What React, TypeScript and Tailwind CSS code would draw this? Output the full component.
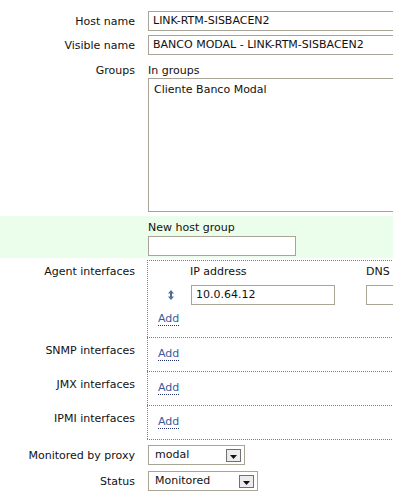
import type { ReactNode } from "react";

const font = { fontFamily: '"DejaVu Sans", Verdana, sans-serif' };

const Label = ({ children, pt = "pt-0" }: { children: ReactNode; pt?: string }) => (
  <div className={`w-[148px] shrink-0 pr-[13px] text-right leading-[13px] ${pt}`}>{children}</div>
);

const AddLink = () => (
  <span className="border-b border-dotted border-[#1f2f6e] leading-[13px] text-[#3c5a9a]">Add</span>
);

const SelectArrow = () => (
  <span className="absolute right-[3px] top-[3px] flex h-[13px] w-[15px] items-end justify-center border border-[#707070] bg-[#ececec] pb-[2px]">
    <svg width="7" height="4" viewBox="0 0 7 4">
      <path d="M0 0h7L3.5 4z" fill="#111" />
    </svg>
  </span>
);

const App = () => {
  return (
    <div
      className="relative h-[498px] w-[393px] overflow-hidden bg-white text-[11px] text-[#111]"
      style={font}>
      <div className="w-[560px] pt-[11px]">
        <div className="flex items-center">
          <Label>Host name</Label>
          <div className="flex h-5 flex-1 items-center border border-[#a9a596] px-[4px]">
            LINK-RTM-SISBACEN2
          </div>
        </div>

        <div className="mt-[4px] flex items-center">
          <Label>Visible name</Label>
          <div className="flex h-5 flex-1 items-center border border-[#a9a596] px-[4px]">
            BANCO MODAL - LINK-RTM-SISBACEN2
          </div>
        </div>

        <div className="mt-[9px] flex">
          <Label>Groups</Label>
          <div className="flex-1">
            <div className="leading-[13px]">In groups</div>
            <div className="mt-px h-[134px] border border-[#a9a596] px-[5px] pt-[3px]">
              Cliente Banco Modal
            </div>
          </div>
        </div>

        <div className="mt-[4px] flex h-[42px] bg-[#ebfdeb] pt-[5px]">
          <div className="w-[148px] shrink-0" />
          <div>
            <div className="leading-[13px]">New host group</div>
            <div className="mt-[2px] h-5 w-[148px] border border-[#a9a596] bg-white" />
          </div>
        </div>

        <div className="mt-[2px] flex">
          <Label pt="pt-[5px]">Agent interfaces</Label>
          <div className="-ml-px h-[77px] flex-1 border-l border-t border-dotted border-[#6e7fb0] pt-[4px]">
            <div className="flex leading-[13px]">
              <span className="ml-[42px] w-[176px]">IP address</span>
              <span>DNS name</span>
            </div>
            <div className="mt-[7px] flex items-center">
              <div className="flex w-[43px] justify-center pl-[2px]">
                <svg width="6" height="10" viewBox="0 0 6 10">
                  <path d="M3 0L6 3.5H4V6.5H6L3 10L0 6.5H2V3.5H0z" fill="#4f6f98" />
                </svg>
              </div>
              <div className="flex h-5 w-[144px] items-center border border-[#a9a596] px-[4px]">
                10.0.64.12
              </div>
              <div className="ml-[31px] h-5 w-[80px] border border-[#a9a596]" />
            </div>
            <div className="ml-[10px] mt-[6px]">
              <AddLink />
            </div>
          </div>
        </div>

        {["SNMP interfaces", "JMX interfaces", "IPMI interfaces"].map((name) => (
          <div key={name} className="flex">
            <Label pt="pt-[7px]">{name}</Label>
            <div className="-ml-px h-[34px] flex-1 border-l border-t border-dotted border-[#6e7fb0] pl-[10px] pt-[8px]">
              <AddLink />
            </div>
          </div>
        ))}
        <div className="ml-[147px] border-t border-dotted border-[#6e7fb0]" />

        <div className="mt-[5px] flex items-center">
          <Label>Monitored by proxy</Label>
          <div className="relative flex h-5 w-[97px] items-center border border-[#a9a596] px-[6px]">
            modal
            <SelectArrow />
          </div>
        </div>

        <div className="mt-[6px] flex items-center">
          <Label>Status</Label>
          <div className="relative flex h-5 w-[110px] items-center border border-[#a9a596] px-[6px]">
            Monitored
            <SelectArrow />
          </div>
        </div>
      </div>
    </div>
  );
};

export default App;
